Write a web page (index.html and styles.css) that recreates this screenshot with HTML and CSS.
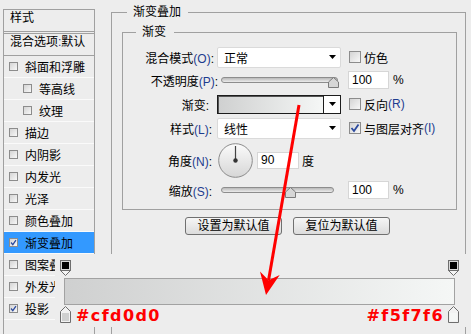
FILE: index.html
```html
<!DOCTYPE html>
<html lang="zh-CN">

<head>
    <meta charset="UTF-8">
    <meta name="viewport" content="width=device-width, initial-scale=1.0">
    <title>图层样式 - 渐变叠加</title>
    <link rel="stylesheet" href="styles.css">
</head>

<body>

    <div class="dialog">
        <div class="styles-panel">
            <div class="panel-head">样式</div>
            <div class="panel-blend">混合选项<span class="key">:</span>默认</div>
            <ul class="fx-list">
                <li><span class="box"></span>斜面和浮雕</li>
                <li class="sub"><span class="box"></span>等高线</li>
                <li class="sub"><span class="box"></span>纹理</li>
                <li><span class="box"></span>描边</li>
                <li><span class="box"></span>内阴影</li>
                <li><span class="box"></span>内发光</li>
                <li><span class="box"></span>光泽</li>
                <li><span class="box"></span>颜色叠加</li>
                <li class="active"><span class="box"><svg viewBox="0 0 10 10"><path d="M1.5 5 L4 8 L8.5 1.5" /></svg></span>渐变叠加</li>
                <li><span class="box"></span>图案叠加</li>
                <li><span class="box"></span>外发光</li>
                <li><span class="box"><svg viewBox="0 0 10 10"><path d="M1.5 5 L4 8 L8.5 1.5" /></svg></span>投影</li>
                <li></li>
            </ul>
        </div>

        <fieldset class="effect">
            <legend>渐变叠加</legend>
            <fieldset class="group">
                <legend>渐变</legend>
                <div class="form">
                    <!-- blend mode -->
                    <label class="lbl lbl-blend">混合模式<span class="key">(O)</span>:</label>
                    <div class="select"><span>正常</span><svg class="arrow" viewBox="0 0 7 4"><path d="M0 0 H7 L3.5 4 Z" /></svg></div>
                    <div class="side"><span class="box big"></span>仿色</div>

                    <!-- opacity -->
                    <label class="lbl lbl-opacity">不透明度<span class="key">(P)</span>:</label>
                    <div class="slider">
                        <svg class="thumb" style="left: 106px" viewBox="0 0 11 11"><path d="M5.5 0.5 L10.5 5 V10.5 H0.5 V5 Z" /></svg>
                    </div>
                    <div class="side side-num"><span class="num">100</span><span class="unit">%</span></div>

                    <!-- gradient -->
                    <label class="lbl lbl-grad">渐变:</label>
                    <div class="grad-pick">
                        <div class="grad-fill"></div>
                        <div class="grad-drop"><svg class="arrow" viewBox="0 0 7 4"><path d="M0 0 H7 L3.5 4 Z" /></svg></div>
                    </div>
                    <div class="side"><span class="box big"></span>反向<span class="key">(R)</span></div>

                    <!-- style -->
                    <label class="lbl">样式<span class="key">(L)</span>:</label>
                    <div class="select"><span>线性</span><svg class="arrow" viewBox="0 0 7 4"><path d="M0 0 H7 L3.5 4 Z" /></svg></div>
                    <div class="side"><span class="box big"><svg viewBox="0 0 10 10"><path d="M1.5 5 L4 8 L8.5 1.5" /></svg></span>与图层对齐<span class="key">(I)</span></div>

                    <!-- angle -->
                    <label class="lbl lbl-angle">角度<span class="key">(N)</span>:</label>
                    <div class="angle">
                        <svg class="dial" viewBox="0 0 35 35">
                            <defs>
                                <linearGradient id="dialFill" x1="0" y1="0" x2="0" y2="1">
                                    <stop offset="0" stop-color="#fbfbfb" />
                                    <stop offset="1" stop-color="#d6d6d6" />
                                </linearGradient>
                            </defs>
                            <circle cx="17.5" cy="17.5" r="16.8" fill="url(#dialFill)" stroke="#8c8c8c" />
                            <line x1="17.5" y1="17.5" x2="17.5" y2="3" stroke="#444" stroke-width="1.2" />
                            <circle cx="17.5" cy="17.5" r="2.2" fill="#333" />
                        </svg>
                        <span class="num num-angle">90</span>
                        <span class="unit-deg">度</span>
                    </div>
                    <div></div>

                    <!-- scale -->
                    <label class="lbl lbl-angle">缩放<span class="key">(S)</span>:</label>
                    <div class="slider slider-short">
                        <svg class="thumb" style="left: 63px" viewBox="0 0 11 11"><path d="M5.5 0.5 L10.5 5 V10.5 H0.5 V5 Z" /></svg>
                    </div>
                    <div class="side side-num"><span class="num">100</span><span class="unit">%</span></div>
                </div>
            </fieldset>

            <div class="buttons">
                <button>设置为默认值</button>
                <button>复位为默认值</button>
            </div>
        </fieldset>
    </div>

    <!-- gradient editor strip laid over the dialog -->
    <div class="grad-editor">
        <div class="stops-row">
            <svg class="stop" viewBox="0 0 11 16"><rect x="0.5" y="0.5" width="10" height="10" fill="#d8d8d8" stroke="#6e6e6e" /><rect x="2" y="2" width="7" height="7" fill="#000" /><path d="M0.5 10.5 H10.5 L5.5 15.5 Z" fill="#f4f4f4" stroke="#6e6e6e" /></svg>
            <svg class="stop" viewBox="0 0 11 16"><rect x="0.5" y="0.5" width="10" height="10" fill="#d8d8d8" stroke="#6e6e6e" /><rect x="2" y="2" width="7" height="7" fill="#000" /><path d="M0.5 10.5 H10.5 L5.5 15.5 Z" fill="#f4f4f4" stroke="#6e6e6e" /></svg>
        </div>
        <div class="grad-bar"></div>
        <div class="bottom-row">
            <svg class="stop stop-low" viewBox="0 0 11 17"><path d="M5.5 0.5 L10.5 5.5 V16.5 H0.5 V5.5 Z" fill="#f2f2f2" stroke="#6e6e6e" /><rect x="2" y="7" width="7" height="8" fill="#cfd0d0" /></svg>
            <span class="hex">#cfd0d0</span>
            <span class="spacer"></span>
            <span class="hex">#f5f7f6</span>
            <svg class="stop stop-low" viewBox="0 0 11 17"><path d="M5.5 0.5 L10.5 5.5 V16.5 H0.5 V5.5 Z" fill="#f2f2f2" stroke="#6e6e6e" /><rect x="2" y="7" width="7" height="8" fill="#f5f7f6" /></svg>
        </div>
    </div>

    <svg class="pointer" viewBox="0 0 471 334">
        <line x1="299" y1="105" x2="268.6" y2="280" stroke="#ff0000" stroke-width="3" />
        <polygon points="266,295 260,271.6 268.6,280.2 279.7,275" fill="#ff0000" />
    </svg>

</body>

</html>
```

FILE: styles.css
```css
* {
    box-sizing: border-box;
}

html,
body {
    margin: 0;
    height: 100%;
}

body {
    position: relative;
    overflow: hidden;
    background: #ededed;
    color: #000;
    font-family: "Liberation Sans", "Noto Sans CJK SC", sans-serif;
    font-size: 12px;
}

.key {
    color: #1d3c8f;
}

.dialog {
    display: flex;
    align-items: flex-start;
    padding: 6px 0 0 3px;
}

/* left list of effects */
.styles-panel {
    flex: none;
    width: 92px;
    height: 340px;
    margin-top: 3px;
    border: 1px solid #a0a0a0;
}

.panel-head {
    height: 24px;
    padding-left: 6px;
    line-height: 17px;
    border-bottom: 3px double #a0a0a0;
}

.panel-blend {
    height: 22px;
    padding-left: 6px;
    line-height: 16px;
    border-bottom: 1px solid #a0a0a0;
    white-space: nowrap;
}

.fx-list {
    list-style: none;
    margin: 0;
    padding: 0;
}

.fx-list li {
    display: flex;
    align-items: center;
    height: 22px;
    padding-left: 5px;
    border-bottom: 1px solid #fafafa;
    white-space: nowrap;
}

.fx-list li.sub {
    padding-left: 19px;
}

.fx-list li.active {
    background: #3399ff;
}

.box {
    flex: none;
    display: flex;
    width: 9px;
    height: 9px;
    margin-right: 7px;
    border: 1px solid #8c8c8c;
    background: linear-gradient(135deg, #d4d4d4, #f8f8f8);
}

.box svg {
    width: 100%;
    height: 100%;
    fill: none;
    stroke: #2b4a9e;
    stroke-width: 1.8;
}

.box.big {
    width: 12px;
    height: 12px;
    margin-right: 3px;
}

/* right side */
.effect {
    flex: none;
    width: 355px;
    height: 340px;
    min-width: 0;
    margin: 0 0 0 16px;
    padding: 7px 8px 0 10px;
    border: 1px solid #a0a0a0;
}

.effect > legend {
    margin-left: 5px;
    padding: 0 7px 0 6px;
    line-height: 13px;
}

.group {
    margin: 0;
    min-width: 0;
    padding: 7px 0 9px 0;
    border: 1px solid #a0a0a0;
}

.group > legend {
    margin-left: 13px;
    padding: 0 8px 0 6px;
    line-height: 13px;
}

.form {
    display: grid;
    grid-template-columns: 90px 124px 1fr;
    grid-template-rows: 22px 24px 24px 24px 40px 20px;
    column-gap: 4px;
    align-items: center;
}

.lbl {
    text-align: right;
    white-space: nowrap;
    padding-right: 1px;
}

.lbl-blend {
    margin-right: -2px;
}

.lbl-opacity {
    margin-right: -6px;
}

.lbl-grad {
    margin-right: 3px;
}

.lbl-angle {
    margin-right: 0;
}

.side {
    display: flex;
    align-items: center;
    margin-left: 4px;
    white-space: nowrap;
}

.side-num {
    margin-left: 3px;
}

.select {
    display: flex;
    align-items: center;
    justify-content: space-between;
    height: 21px;
    padding: 0 4px 0 6px;
    background: #fff;
    border: 1px solid #dadada;
    border-radius: 2px;
}

.arrow {
    width: 7px;
    height: 4px;
    fill: #000;
}

.slider {
    position: relative;
    height: 6px;
    margin: 0 3px 0 4px;
    border: 1px solid #8d8d8d;
    border-radius: 3px;
    background: linear-gradient(#b9b9b9, #ececec);
}

.slider-short {
    margin-right: 7px;
}

.thumb {
    position: absolute;
    top: -1px;
    width: 11px;
    height: 11px;
    fill: #d6d6d6;
    stroke: #7a7a7a;
}

.num {
    display: inline-block;
    width: 41px;
    height: 18px;
    padding-left: 3px;
    line-height: 16px;
    background: #fff;
    border: 1px solid #d6d6d6;
}

.unit {
    margin-left: 4px;
}

.grad-pick {
    display: flex;
    height: 19px;
    border: 1px solid #1c1c1c;
    background: #fff;
}

.grad-fill {
    flex: 1;
    background: linear-gradient(to right, #cfd0d0, #f5f7f6);
    box-shadow: inset 1px 1px 0 #555;
}

.grad-drop {
    display: flex;
    align-items: center;
    justify-content: center;
    width: 17px;
    border-left: 1px solid #1c1c1c;
}

.angle {
    display: flex;
    align-items: center;
    white-space: nowrap;
}

.dial {
    width: 35px;
    height: 35px;
    margin-left: 1px;
}

.num-angle {
    width: 42px;
    height: 17px;
    margin-left: 4px;
    line-height: 15px;
}

.unit-deg {
    margin-left: 3px;
}

.buttons {
    display: flex;
    gap: 11px;
    margin: 7px 0 0 63px;
}

.buttons button {
    width: 97px;
    height: 18px;
    padding: 0;
    font-family: inherit;
    font-size: 12px;
    line-height: 16px;
    color: #000;
    border: 1px solid #707070;
    border-radius: 3px;
    background: linear-gradient(#f6f6f6, #dcdcdc);
}

/* gradient editor strip */
.grad-editor {
    position: absolute;
    left: 55px;
    top: 254px;
    width: 416px;
    height: 73px;
    padding: 6px 12px 0 5px;
    background: #ededed;
}

.stops-row {
    display: flex;
    justify-content: space-between;
    height: 16px;
}

.stop {
    flex: none;
    width: 11px;
    height: 16px;
}

.stop-low {
    height: 17px;
}

.grad-bar {
    height: 27px;
    margin: 2px 4px 0 4px;
    border: 1px solid #a2a2a2;
    background: linear-gradient(to right, #cfd0d0, #f5f7f6);
}

.bottom-row {
    display: flex;
    align-items: flex-start;
    margin-top: 1px;
}

.hex {
    margin: 0 4px 0 5px;
    font-family: "DejaVu Sans", sans-serif;
    font-weight: bold;
    font-size: 16px;
    line-height: 19px;
    letter-spacing: 1.4px;
    color: #ff0000;
}

.spacer {
    flex: 1;
}

.pointer {
    position: absolute;
    left: 0;
    top: 0;
    width: 471px;
    height: 334px;
    pointer-events: none;
}
```
